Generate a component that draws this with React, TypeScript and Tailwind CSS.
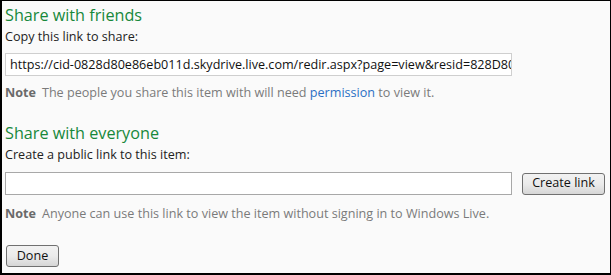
import React from "react";

const font = { fontFamily: '"Segoe UI", "Open Sans", "Noto Sans", sans-serif' };

const GrayButton = ({ title, className = "" }: { title: string; className?: string }) => (
  <button
    type="button"
    className={`h-[22px] whitespace-nowrap rounded-[3px] border border-[#707070] bg-gradient-to-b from-[#f2f2f2] via-[#ebebeb] to-[#d6d6d6] px-1 text-[12.6px] leading-none text-[#111] ${className}`}
  >
    {title}
  </button>
);

const Note = ({ children }: { children: React.ReactNode }) => (
  <p className="text-[12.6px] leading-[16px] text-[#7a7a7a]">
    <span className="mr-1.5 font-bold text-[#6a6a6a]">Note</span>
    {children}
  </p>
);

export default function App() {
  return (
    <div
      style={font}
      className="flex h-[275px] w-[611px] flex-col border-t border-r border-l-2 border-b-2 border-black bg-[#fafafa] pl-[3px]"
    >
      <h2 className="mt-[3px] text-[16.2px] leading-[22px] text-[#17883a]">Share with friends</h2>
      <p className="mt-[3px] text-[12.6px] leading-[16px] text-[#222]">Copy this link to share:</p>
      <input
        readOnly
        style={font}
        value="https://cid-0828d80e86eb011d.skydrive.live.com/redir.aspx?page=view&resid=828D80E86EB011D!123"
        className="mt-[8px] h-[23px] w-[507px] border border-[#cfcfcf] bg-white pl-[4px] text-[12.6px] text-[#111] outline-none"
      />
      <div className="mt-[9px]">
        <Note>
          The people you share this item with will need <span className="text-[#2a6fc4]">permission</span> to view it.
        </Note>
      </div>

      <h2 className="mt-[21px] text-[16.2px] leading-[22px] text-[#17883a]">Share with everyone</h2>
      <p className="mt-[3px] text-[12.6px] leading-[16px] text-[#222]">Create a public link to this item:</p>
      <div className="mt-[9px] flex items-center">
        <input
          readOnly
          className="h-[23px] w-[507px] border border-[#a8a8a8] bg-white outline-none"
        />
        <GrayButton title="Create link" className="ml-[10px] w-[83px]" />
      </div>
      <div className="mt-[11px]">
        <Note>Anyone can use this link to view the item without signing in to Windows Live.</Note>
      </div>
      <div className="mt-[20px]">
        <GrayButton title="Done" className="ml-[1px] w-[53px]" />
      </div>
    </div>
  );
}
